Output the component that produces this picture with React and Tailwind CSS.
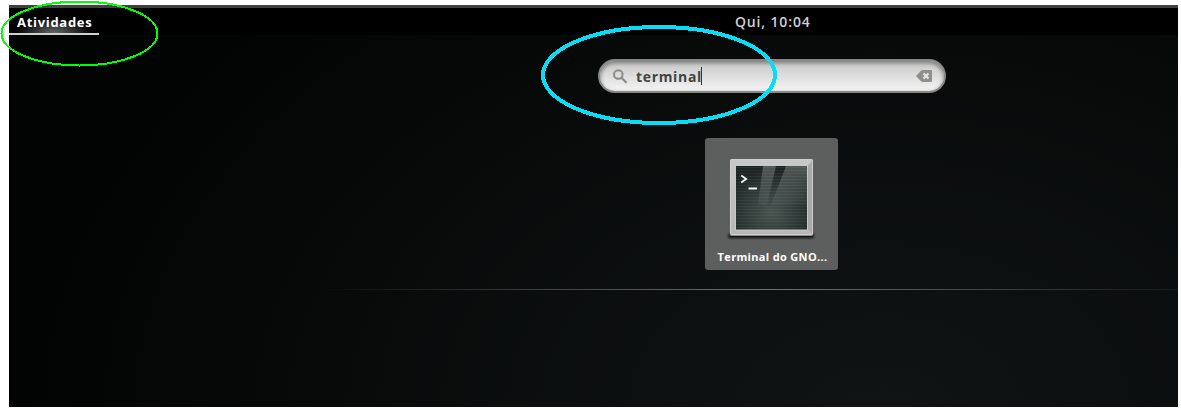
import React from "react";

function TopBar() {
  return (
    <header className="h-[30px] shrink-0 border-t-[3px] border-[#41413e] bg-black grid grid-cols-[90px_1fr] text-[13px] leading-[27px] font-bold">
      <button className="h-[27px] border-b-2 border-[#d0d0d0] bg-[radial-gradient(ellipse_38px_15px_at_50%_100%,#686868,#000000)] pl-2 text-left leading-[28px] text-white whitespace-nowrap">
        <span className="tracking-[0.7px]">Atividades</span>
      </button>
      <time className="pl-[636px] text-[14px] font-semibold text-[#cfcfcf] whitespace-nowrap">
        <span className="tracking-[0.85px]">Qui, 10:04</span>
      </time>
    </header>
  );
}

function SearchBox() {
  return (
    <div className="ml-[589px] mt-6 flex h-[34px] w-[348px] shrink-0 items-center rounded-full border-2 border-[#888985] bg-linear-to-b from-[#c8c8c8] to-[#f4f4f4] shadow-[inset_0_2px_4px_#777777] pl-[13px] pr-3">
      <svg className="size-[15px] shrink-0" viewBox="0 0 15 15" fill="none" stroke="#8b8c88" strokeWidth="2">
        <circle cx="5.3" cy="5.5" r="4.3" />
        <path d="M8.5 8.7l5 5" strokeWidth="2.2" />
      </svg>
      <div className="ml-2 flex items-center text-[14px] leading-5 font-bold text-[#414443]">
        <span className="pt-0.5 tracking-[0.66px]">terminal</span>
        <span className="-ml-px h-[18px] w-px bg-[#333333]" />
      </div>
      <svg className="ml-auto h-3 w-4 shrink-0" viewBox="0 0 16 12">
        <path d="M0 6 5 0.8Q5.7 0 7 0H15Q16 0 16 1V11Q16 12 15 12H7Q5.7 12 5 11.2Z" fill="#8e908b" />
        <path d="M7.5 3.5l5 5m0-5l-5 5" stroke="#e8e8e8" strokeWidth="2" />
      </svg>
    </div>
  );
}

function TerminalIcon() {
  return (
    <svg className="mr-px h-[84px] w-[92px]" viewBox="0 0 92 84">
      <defs>
        <linearGradient id="frame" x1="0" y1="0" x2="0" y2="1">
          <stop offset="0" stopColor="#c9c8c9" />
          <stop offset="1" stopColor="#b8b7b8" />
        </linearGradient>
        <radialGradient id="screen" cx="0.5" cy="0.72" r="0.66">
          <stop offset="0" stopColor="#495451" />
          <stop offset="1" stopColor="#1c2523" />
        </radialGradient>
        <linearGradient id="shine" x1="0" y1="0" x2="0" y2="1">
          <stop offset="0" stopColor="#ffffff" stopOpacity="0.23" />
          <stop offset="1" stopColor="#ffffff" stopOpacity="0.03" />
        </linearGradient>
        <pattern id="scan" width="4" height="3" patternUnits="userSpaceOnUse">
          <path d="M0 1.5h4" stroke="#829b91" strokeOpacity="0.1" />
        </pattern>
        <filter id="soft" x="-10%" y="-200%" width="120%" height="500%">
          <feGaussianBlur stdDeviation="1.3" />
        </filter>
      </defs>
      <rect x="3" y="77" width="86" height="4" rx="2" fill="#111111" filter="url(#soft)" />
      <rect x="5" y="2" width="83" height="77" rx="1.5" fill="#8c8c8c" />
      <rect x="5.5" y="2.5" width="82" height="75" rx="1" fill="url(#frame)" stroke="#d0d0d0" />
      <path d="M83 8.5L87 4V76L83 72Z" fill="#aaa9aa" />
      <rect x="10.5" y="8.5" width="72" height="64.5" fill="url(#screen)" stroke="#c8c8c8" />
      <rect x="11" y="9" width="71" height="63" fill="url(#scan)" />
      <path d="M38 9H51L42 48H33ZM61 9H82V48H46Z" fill="url(#shine)" />
      <path d="M16.2 18.5l5 3.5-5 3.5M23.5 31.5h8.5" fill="none" stroke="#f5f5f5" strokeWidth="1.8" />
    </svg>
  );
}

function AppTile() {
  return (
    <button className="ml-[696px] mt-[45px] flex h-[132px] w-[133px] shrink-0 flex-col items-center rounded-[3px] bg-[#5d5f5e] pt-[19px]">
      <TerminalIcon />
      <span className="mt-2 ml-[2px] whitespace-nowrap text-[11px] leading-4 font-bold tracking-[0.33px] text-white">Terminal do GNO...</span>
    </button>
  );
}

function Annotations() {
  return (
    <svg className="pointer-events-none absolute inset-0 h-[410px] w-[1181px]" viewBox="0 0 1181 410" fill="none" shapeRendering="crispEdges">
      <ellipse cx="79.5" cy="33.5" rx="78" ry="32" stroke="#00ff00" strokeWidth="2" />
      <ellipse cx="659" cy="75" rx="116" ry="48" stroke="#0bdcf5" strokeWidth="4" />
    </svg>
  );
}

export default function App() {
  return (
    <div className="relative h-[410px] w-[1181px] overflow-hidden bg-white pl-[9px] pr-[3px] pt-[5px] pb-[3px] font-['Open_Sans','Noto_Sans',sans-serif]">
      <main className="flex h-[402px] flex-col overflow-hidden bg-black bg-[radial-gradient(ellipse_850px_580px_at_870px_410px,#101415,#090b0b_60%,#020303)]">
        <TopBar />
        <SearchBox />
        <AppTile />
        <div className="ml-[311px] mt-[19px] h-px w-[900px] shrink-0 bg-linear-to-r from-transparent via-[#707372] to-transparent" />
      </main>
      <Annotations />
    </div>
  );
}
